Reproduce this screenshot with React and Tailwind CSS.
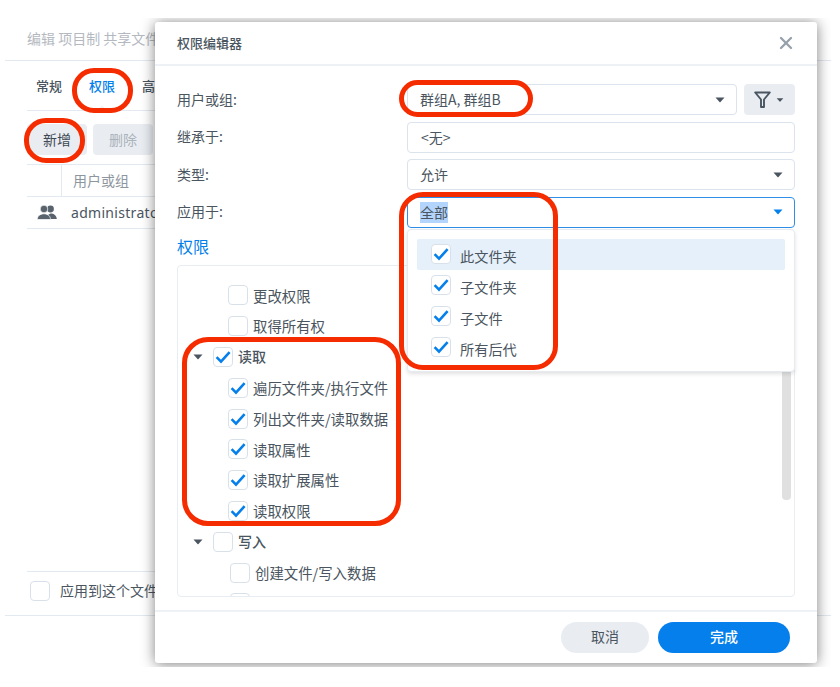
import React from "react";
import { X } from "lucide-react";

const font = { fontFamily: '"Noto Sans CJK SC", "Noto Sans", sans-serif' };

function Caret({ className = "" }) {
  return (
    <svg width="10" height="6" viewBox="0 0 10 6" className={className} fill="currentColor">
      <path d="M0.5 0.5h9L5.5 5a.7.7 0 0 1-1 0z" />
    </svg>
  );
}

function Box({ checked }) {
  return (
    <span className="flex h-5 w-5 shrink-0 items-center justify-center rounded-[4px] border border-[#d8e1ea] bg-white">
      {checked && (
        <svg width="16" height="14" viewBox="0 0 16 14" fill="none">
          <path d="M1.6 7.2 6 11.6 14.6 2.200" stroke="#057feb" strokeWidth="2.6" />
        </svg>
      )}
    </span>
  );
}

function Leaf({ label, checked, pad = "pl-[50px]" }) {
  return (
    <div className={`flex h-[30.8px] items-center gap-[5px] ${pad}`}>
      <Box checked={checked} />
      <span className="whitespace-nowrap">{label}</span>
    </div>
  );
}

function Parent({ label, checked }) {
  return (
    <div className="flex h-[30.8px] items-center pl-[15px]">
      <Caret className="text-[#4a5560]" />
      <span className="ml-[10px]"><Box checked={checked} /></span>
      <span className="ml-[5px] text-[14px] font-medium">{label}</span>
    </div>
  );
}

function Field({ label, children }) {
  return (
    <div className="flex h-[31px] items-center">
      <span className="w-[230px] shrink-0 pb-[1px] text-[14px] text-[#4a5560]">{label}</span>
      {children}
    </div>
  );
}

function Select({ value, border = "border-[#dbe3ec]", caret = "text-[#4a5560]" }) {
  return (
    <div className={`flex h-[31px] flex-1 items-center justify-between rounded-[4px] border bg-white pl-[12px] pr-[11px] text-[14px] text-[#4a5560] ${border}`}>
      {value}
      <Caret className={caret} />
    </div>
  );
}

function Ring({ className }) {
  return <div className={`pointer-events-none absolute border-[5px] border-[#f52c00] ${className}`} />;
}

function Background() {
  return (
    <div className="flex h-full w-full flex-col text-[14px] text-[#4a5560]">
      <div className="flex h-[43px] shrink-0 items-center border-b border-[#e3e9f0] pb-[2px] pl-[22px] text-[#b4b9bf]">
        编辑 项目制 共享文件
      </div>
      <div className="flex min-h-0 flex-1 flex-col px-[22px]">
        <div className="relative flex h-[50px] shrink-0 items-center border-b border-[#e3e9f0] pl-[9px] text-[13px] font-medium">
          <span>常规</span>
          <span className="ml-[27px] text-[#057feb]">权限</span>
          <span className="ml-[27px]">高级</span>
          <svg width="10" height="5" viewBox="0 0 10 5" className="absolute bottom-[-1px] left-[70px]" fill="#fff" stroke="#e3e9f0">
            <path d="M0 5 5 .5 10 5" />
          </svg>
        </div>
        <div className="flex h-[54px] shrink-0 items-start gap-[6px] border-b border-[#e3e9f0] pt-[13px]">
          <div className="flex h-[31px] w-[60px] items-center justify-center rounded-[4px] bg-[#e9edf2] text-[#3f4953]">新增</div>
          <div className="flex h-[31px] w-[60px] items-center justify-center rounded-[4px] bg-[#e9edf2] text-[#aab2ba]">删除</div>
        </div>
        <div className="flex h-[32px] shrink-0 items-center border-b border-[#e3e9f0] text-[#8d969f]">
          <span className="h-full w-[35px] border-r border-[#e3e9f0]" />
          <span className="ml-[11px]">用户或组</span>
        </div>
        <div className="flex h-[32px] shrink-0 items-center border-b border-[#e3e9f0]">
          <span className="flex w-[44px] justify-center pr-[5px]">
            <svg width="20" height="15" viewBox="0 0 20 15" fill="#59636d">
              <circle cx="13.5" cy="4" r="3.4" />
              <path d="M9.5 14c.2-3 1-4.600 4-5.600 3.500 0 6 2 6.300 5.600z" />
              <circle cx="7" cy="4" r="3.800" stroke="#fff" strokeWidth=".7" />
              <path d="M.3 14.500c.2-3.500 2-5.300 6.700-5.800 4.500.5 6.300 2.300 6.500 5.800z" stroke="#fff" strokeWidth=".7" />
            </svg>
          </span>
          <span className="text-[14px] tracking-[0.3px]" style={{ fontFamily: '"Noto Sans", sans-serif' }}>administrator</span>
        </div>
        <div className="flex-1" />
        <div className="flex h-[44px] shrink-0 items-center border-t border-[#e3e9f0] pb-[6px] pl-[3px]">
          <Box />
          <span className="ml-[10px]">应用到这个文件夹</span>
        </div>
      </div>
      <div className="h-[52px] shrink-0 border-t border-[#e3e9f0]" />
    </div>
  );
}

function Modal() {
  return (
    <div className="absolute left-[150px] top-[4px] flex h-[641px] w-[662px] flex-col rounded-[3px] bg-white text-[#4a5560] shadow-[0_1px_14px_rgba(0,0,0,0.5)]">
      <div className="flex h-[44px] shrink-0 items-center justify-between border-b-2 border-[#eef2f6] pl-[22px] pr-[21px]">
        <span className="text-[13px] font-medium">权限编辑器</span>
        <X size={20} strokeWidth={2.8} className="text-[#97a1ab]" />
      </div>
      <div className="flex flex-1 flex-col pl-[22px] pr-[22px] pt-[18px]">
        <div className="flex flex-col gap-[6.5px]">
          <Field label="用户或组:">
            <div className="flex flex-1 gap-[7px]">
              <Select value="群组A, 群组B" />
              <div className="flex h-[31px] w-[51px] items-center justify-center gap-[4px] rounded-[4px] bg-[#e9edf2]">
                <svg width="17" height="17" viewBox="0 0 17 17" fill="none" stroke="#4a5560" strokeWidth="1.9">
                  <path d="M1.200 1.500h14.600L10 8.500v7.500h-3V8.500z" strokeLinejoin="round" />
                </svg>
                <Caret className="scale-75 text-[#4a5560]" />
              </div>
            </div>
          </Field>
          <Field label="继承于:">
            <div className="flex h-[31px] flex-1 items-center rounded-[4px] border border-[#dbe3ec] pl-[13px] text-[14px]">&lt;无&gt;</div>
          </Field>
          <Field label="类型:">
            <Select value="允许" />
          </Field>
          <Field label="应用于:">
            <Select
              value={<span className="bg-[#b3d4fc]">全部</span>}
              border="border-[#2f8fe8]"
              caret="text-[#057feb]"
            />
          </Field>
        </div>
        <div className="flex h-[37.5px] shrink-0 items-center text-[16px] text-[#057feb]">权限</div>
        <div className="relative h-[332px] shrink-0 overflow-hidden rounded-[4px] border border-[#e8edf3] pt-[14px] text-[14.4px]">
          <Leaf label="更改权限" />
          <Leaf label="取得所有权" />
          <Parent label="读取" checked />
          <Leaf label="遍历文件夹/执行文件" checked />
          <Leaf label="列出文件夹/读取数据" checked />
          <Leaf label="读取属性" checked />
          <Leaf label="读取扩展属性" checked />
          <Leaf label="读取权限" checked />
          <Parent label="写入" />
          <Leaf label="创建文件/写入数据" pad="pl-[52px]" />
          <Leaf label="" pad="pl-[52px]" />
          <div className="absolute right-[3px] top-[100px] h-[134px] w-[9px] rounded-b-[4px] bg-[#e0e0e0]" />
        </div>
      </div>
      <div className="flex h-[53px] shrink-0 items-start justify-end gap-[9px] border-t-2 border-[#eef2f6] pr-[27px] pt-[10px] text-[14px]">
        <div className="flex h-[31px] w-[88px] items-center justify-center rounded-full bg-[#e9edf2] pb-[2px]">取消</div>
        <div className="flex h-[31px] w-[132px] items-center justify-center rounded-full bg-[#057feb] pb-[2px] font-medium text-white">完成</div>
      </div>
      <div className="absolute left-[252px] top-[207px] flex h-[143px] w-[388px] flex-col rounded-[4px] border border-[#e6ebf1] bg-white px-[9px] pt-[9px] text-[14.2px] shadow-[0_2px_4px_rgba(0,0,0,0.12)]">
        {["此文件夹", "子文件夹", "子文件", "所有后代"].map((t, i) => (
          <div key={t} className={`flex h-[31px] shrink-0 items-center gap-[9px] rounded-[2px] pl-[14px] ${i === 0 ? "bg-[#e6f0fa]" : ""}`}>
            <span className="-mt-[2px]"><Box checked /></span>
            <span className="pt-[4px]">{t}</span>
          </div>
        ))}
      </div>
    </div>
  );
}

export default function App() {
  return (
    <div className="relative h-[687px] w-[840px] overflow-hidden bg-white pl-[5px] pt-[18px]" style={font}>
      <div className="relative h-[649px] w-[826px] overflow-hidden">
        <Background />
        <Modal />
      </div>
      <Ring className="left-[72px] top-[68px] h-[45px] w-[61px] rounded-[22px]" />
      <Ring className="left-[24px] top-[118px] h-[45px] w-[61px] rounded-[22px]" />
      <Ring className="left-[399px] top-[80px] h-[37px] w-[134px] rounded-full" />
      <Ring className="left-[399px] top-[192px] h-[178px] w-[159px] rounded-[24px]" />
      <Ring className="left-[182px] top-[337px] h-[189px] w-[219px] rounded-[26px]" />
    </div>
  );
}
